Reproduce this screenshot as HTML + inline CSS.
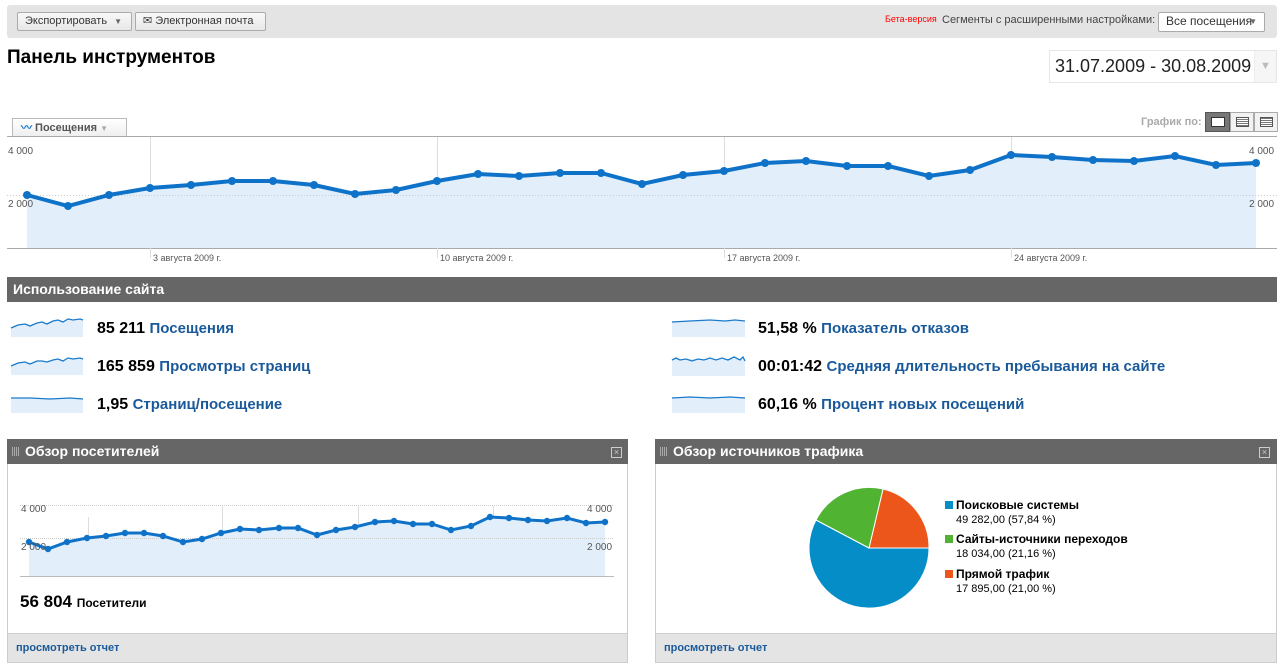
<!DOCTYPE html>
<html><head><meta charset="utf-8">
<style>
*{margin:0;padding:0;box-sizing:border-box}
body{width:1283px;height:671px;background:#fff;font-family:"Liberation Sans","DejaVu Sans",sans-serif;position:relative;overflow:hidden;color:#000}
.a{position:absolute;white-space:nowrap}
.btn{position:absolute;white-space:nowrap;background:linear-gradient(#f8f8f8,#e8e8e8);border:1px solid #aaa;border-radius:2px;font-size:11px;color:#333;line-height:17px;padding:0 7px}
.hdr{position:absolute;background:#666;color:#fff;font-weight:bold;font-size:14px;line-height:25px}
.row{position:absolute;font-size:16px;font-weight:bold;white-space:nowrap}
.row span{color:#1a5a9a;font-size:15px}
</style></head><body>
<div class="a" style="left:7px;top:5px;width:1270px;height:33px;background:#e4e4e4;border-radius:3px"></div>
<div class="btn" style="left:17px;top:12px;width:115px;height:19px">Экспортировать <span style="font-size:8px;color:#666;margin-left:4px">▼</span></div>
<div class="btn" style="left:135px;top:12px;width:131px;height:19px"><span style="font-size:11px">✉</span> Электронная почта</div>
<div class="a" style="left:885px;top:14px;font-size:9px;color:#f00">Бета-версия</div>
<div class="a" style="left:942px;top:14px;font-size:11px;color:#444">Сегменты с расширенными настройками:</div>
<div class="btn" style="left:1158px;top:12px;width:107px;height:20px;background:#fff;font-size:12px">Все посещения <span style="position:absolute;right:7px;font-size:8px;color:#666">▼</span></div>
<div class="a" style="left:7px;top:47px;font-size:19px;font-weight:bold">Панель инструментов</div>
<div class="a" style="left:1049px;top:50px;width:228px;height:33px;border:1px solid #e6e6e6;font-size:18px;line-height:31px;padding-left:5px;color:#222">31.07.2009 - 30.08.2009<span style="position:absolute;right:0;top:0;width:22px;height:31px;border-left:1px solid #eee;background:#f6f6f6;color:#bbb;font-size:11px;text-align:center">▼</span></div>
<div class="a" style="left:1141px;top:116px;font-size:11px;color:#aaa;font-weight:bold">График по:</div>
<div class="a" style="left:1205px;top:112px;width:25px;height:20px;background:#777;border:1px solid #555"><div style="margin:4px 5px;width:14px;height:10px;background:#fff;border:1px solid #333"></div></div>
<div class="a" style="left:1230px;top:112px;width:24px;height:20px;background:#f2f2f2;border:1px solid #aaa"><div style="margin:4px 5px;width:13px;height:10px;border:1px solid #555;background:repeating-linear-gradient(#fff 0 1px,#777 1px 2px)"></div></div>
<div class="a" style="left:1254px;top:112px;width:24px;height:20px;background:#f2f2f2;border:1px solid #aaa"><div style="margin:4px 5px;width:13px;height:10px;border:1px solid #555;background:repeating-linear-gradient(#777 0 1px,#fff 1px 2px)"></div></div>
<div class="a" style="left:12px;top:118px;width:115px;height:19px;border:1px solid #bbb;border-bottom:none;background:linear-gradient(#fff,#eee);font-size:11px;font-weight:bold;color:#555;line-height:18px;padding-left:8px"><span style="color:#1a7acc">〰</span> Посещения <span style="color:#aaa;font-size:8px">▼</span></div>

<svg class="a" style="left:0;top:0" width="1283" height="671">
<defs>
<marker id="d" markerWidth="10" markerHeight="10" refX="5" refY="5" markerUnits="userSpaceOnUse"><circle cx="5" cy="5" r="4" fill="#0f72c9"/></marker>
<marker id="s" markerWidth="8" markerHeight="8" refX="4" refY="4" markerUnits="userSpaceOnUse"><circle cx="4" cy="4" r="3.2" fill="#0f72c9"/></marker>
</defs>
<line x1="7" y1="136.5" x2="1277" y2="136.5" stroke="#aaa"/>
<line x1="7" y1="248.5" x2="1277" y2="248.5" stroke="#aaa"/>
<g stroke="#ddd"><line x1="150.5" y1="137" x2="150.5" y2="258"/><line x1="437.5" y1="137" x2="437.5" y2="258"/><line x1="724.5" y1="137" x2="724.5" y2="258"/><line x1="1011.5" y1="137" x2="1011.5" y2="258"/></g>
<polygon fill="#e2effa" points="27,248 27,195 68,206 109,195 150,188 191,185 232,181 273,181 314,185 355,194 396,190 437,181 478,174 519,176 560,173 601,173 642,184 683,175 724,171 765,163 806,161 847,166 888,166 929,176 970,170 1011,155 1052,157 1093,160 1134,161 1175,156 1216,165 1256,163 1256,248"/>
<line x1="7" y1="195.5" x2="1277" y2="195.5" stroke="#ccc" stroke-dasharray="1,2"/>
<polyline fill="none" stroke="#0f72c9" stroke-width="4" marker-start="url(#d)" marker-mid="url(#d)" marker-end="url(#d)" points="27,195 68,206 109,195 150,188 191,185 232,181 273,181 314,185 355,194 396,190 437,181 478,174 519,176 560,173 601,173 642,184 683,175 724,171 765,163 806,161 847,166 888,166 929,176 970,170 1011,155 1052,157 1093,160 1134,161 1175,156 1216,165 1256,163"/>
<g font-size="10" fill="#555" font-family="Liberation Sans,sans-serif">
<text x="8" y="154">4 000</text><text x="8" y="207">2 000</text>
<text x="1249" y="154">4 000</text><text x="1249" y="207">2 000</text>
<text x="153" y="261" font-size="9">3 августа 2009 г.</text><text x="440" y="261" font-size="9">10 августа 2009 г.</text>
<text x="727" y="261" font-size="9">17 августа 2009 г.</text><text x="1014" y="261" font-size="9">24 августа 2009 г.</text>
</g>
<!-- sparks -->
<g fill="#e2effa">
<path d="M11,328 L18,325 25,324 30,326 37,323 42,322 47,324 53,321 58,320 63,322 68,319 73,320 80,319 83,320 L83,337 L11,337Z"/>
<path d="M11,366 L18,363 25,362 30,364 37,361 42,361 47,362 53,360 58,359 63,361 68,358 73,359 80,358 83,359 L83,375 L11,375Z"/>
<rect x="11" y="398" width="72" height="15"/>
<rect x="672" y="321" width="73" height="16"/>
<rect x="672" y="359" width="73" height="17"/>
<rect x="672" y="397" width="73" height="16"/>
</g>
<g fill="none" stroke="#1a7acc" stroke-width="1.3">
<path d="M11,328 L18,325 25,324 30,326 37,323 42,322 47,324 53,321 58,320 63,322 68,319 73,320 80,319 83,320"/>
<path d="M11,366 L18,363 25,362 30,364 37,361 42,361 47,362 53,360 58,359 63,361 68,358 73,359 80,358 83,359"/>
<path d="M11,398 L30,398 50,399 70,398 83,399"/>
<path d="M672,322 L690,321 710,320 725,321 735,320 745,321"/>
<path d="M672,360 L676,358 680,360 686,359 692,361 698,359 704,360 710,358 716,360 722,358 728,360 734,357 740,360 743,357 745,361"/>
<path d="M672,398 L690,397 710,398 730,397 745,398"/>
</g>
<!-- small chart -->
<line x1="20" y1="505.5" x2="614" y2="505.5" stroke="#ccc" stroke-dasharray="1,1"/>
<line x1="20" y1="576.5" x2="614" y2="576.5" stroke="#bbb"/>
<g stroke="#ddd"><line x1="88.5" y1="517" x2="88.5" y2="576"/><line x1="222.5" y1="506" x2="222.5" y2="576"/><line x1="358.5" y1="506" x2="358.5" y2="576"/><line x1="493.5" y1="506" x2="493.5" y2="576"/></g>
<polygon fill="#e2effa" points="29,576 29,542 48,549 67,542 87,538 106,536 125,533 144,533 163,536 183,542 202,539 221,533 240,529 259,530 279,528 298,528 317,535 336,530 355,527 375,522 394,521 413,524 432,524 451,530 471,526 490,517 509,518 528,520 547,521 567,518 586,523 605,522 605,576"/>
<line x1="20" y1="538.5" x2="614" y2="538.5" stroke="#ccc" stroke-dasharray="1,1"/>
<polyline fill="none" stroke="#0f72c9" stroke-width="3" marker-start="url(#s)" marker-mid="url(#s)" marker-end="url(#s)" points="29,542 48,549 67,542 87,538 106,536 125,533 144,533 163,536 183,542 202,539 221,533 240,529 259,530 279,528 298,528 317,535 336,530 355,527 375,522 394,521 413,524 432,524 451,530 471,526 490,517 509,518 528,520 547,521 567,518 586,523 605,522"/>
<g font-size="10" fill="#555" font-family="Liberation Sans,sans-serif">
<text x="21" y="512">4 000</text><text x="21" y="550">2 000</text><text x="587" y="512">4 000</text><text x="587" y="550">2 000</text>
</g>
<!-- pie -->
<path d="M869,548 L883,489 A60,60 0 0 1 929,548 Z" fill="#ec561b" stroke="#fff" stroke-width="1"/>
<path d="M869,548 L929,548 A60,60 0 1 1 816,520 Z" fill="#058dc7" stroke="#fff" stroke-width="1"/>
<path d="M869,548 L816,520 A60,60 0 0 1 883,489 Z" fill="#50b432" stroke="#fff" stroke-width="1"/>
</svg>

<div class="hdr" style="left:7px;top:277px;width:1270px;padding-left:6px">Использование сайта</div>
<div class="row" style="left:97px;top:320px">85 211 <span>Посещения</span></div>
<div class="row" style="left:97px;top:358px">165 859 <span>Просмотры страниц</span></div>
<div class="row" style="left:97px;top:396px">1,95 <span>Страниц/посещение</span></div>
<div class="row" style="left:758px;top:320px">51,58 % <span>Показатель отказов</span></div>
<div class="row" style="left:758px;top:358px">00:01:42 <span>Средняя длительность пребывания на сайте</span></div>
<div class="row" style="left:758px;top:396px">60,16 % <span>Процент новых посещений</span></div>

<div class="a" style="left:7px;top:439px;width:621px;height:224px;border:1px solid #ccc"></div>
<div class="hdr" style="left:7px;top:439px;width:621px;padding-left:18px">Обзор посетителей</div>
<div class="a" style="left:12px;top:447px;width:7px;height:9px;background:repeating-linear-gradient(90deg,#aaa 0 1px,transparent 1px 2px)"></div>
<div class="a" style="left:611px;top:447px;width:11px;height:11px;border:1px solid #ccc;color:#ccc;font-size:9px;line-height:9px;text-align:center">×</div>
<div class="a" style="left:20px;top:592px;font-size:17px;font-weight:bold">56 804 <span style="font-size:12px">Посетители</span></div>
<div class="a" style="left:8px;top:633px;width:619px;height:29px;background:#e4e4e4;border-top:1px solid #ccc;font-size:11px;font-weight:bold;color:#1a5a9a;line-height:28px;padding-left:8px">просмотреть отчет</div>

<div class="a" style="left:655px;top:439px;width:622px;height:224px;border:1px solid #ccc"></div>
<div class="hdr" style="left:655px;top:439px;width:622px;padding-left:18px">Обзор источников трафика</div>
<div class="a" style="left:660px;top:447px;width:7px;height:9px;background:repeating-linear-gradient(90deg,#aaa 0 1px,transparent 1px 2px)"></div>
<div class="a" style="left:1259px;top:447px;width:11px;height:11px;border:1px solid #ccc;color:#ccc;font-size:9px;line-height:9px;text-align:center">×</div>
<div class="a" style="left:945px;top:498px;font-size:12px;line-height:14px"><b style="display:inline-block;width:8px;height:8px;background:#058dc7;margin-right:3px"></b><b>Поисковые системы</b><br><span style="font-size:11px;margin-left:11px">49 282,00 (57,84 %)</span></div>
<div class="a" style="left:945px;top:532px;font-size:12px;line-height:14px"><b style="display:inline-block;width:8px;height:8px;background:#50b432;margin-right:3px"></b><b>Сайты-источники переходов</b><br><span style="font-size:11px;margin-left:11px">18 034,00 (21,16 %)</span></div>
<div class="a" style="left:945px;top:567px;font-size:12px;line-height:14px"><b style="display:inline-block;width:8px;height:8px;background:#ec561b;margin-right:3px"></b><b>Прямой трафик</b><br><span style="font-size:11px;margin-left:11px">17 895,00 (21,00 %)</span></div>
<div class="a" style="left:656px;top:633px;width:620px;height:29px;background:#e4e4e4;border-top:1px solid #ccc;font-size:11px;font-weight:bold;color:#1a5a9a;line-height:28px;padding-left:8px">просмотреть отчет</div>
</body></html>
